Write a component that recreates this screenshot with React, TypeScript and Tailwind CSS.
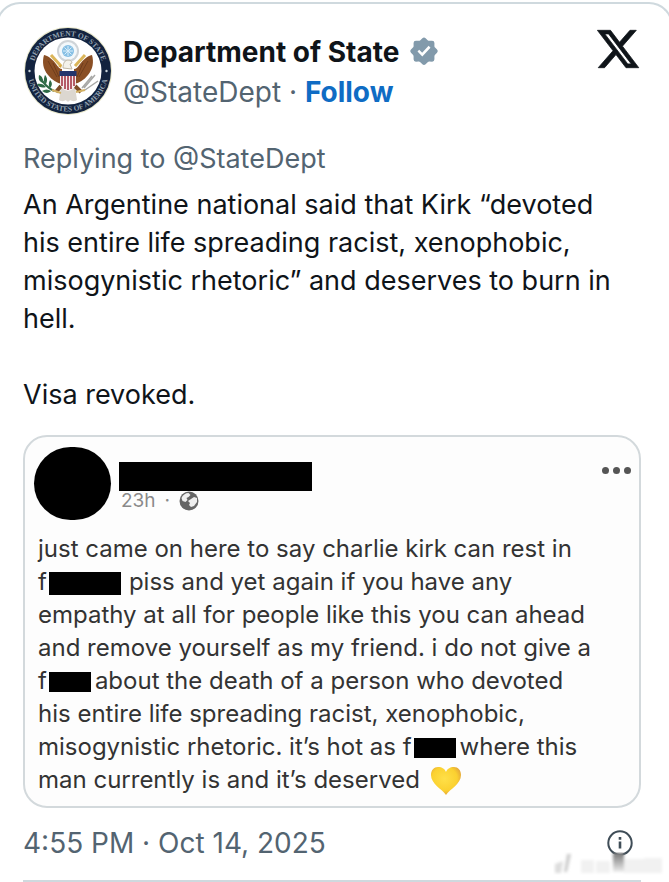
import type { ReactNode } from "react";

function StateSeal() {
  return (
    <svg viewBox="0 0 90 90" className="size-[90px] shrink-0" role="img" aria-label="Department of State">
      <defs>
        <path id="seal-top" d="M10 45a35 35 0 0 1 70 0" />
        <path id="seal-bottom" d="M4.600 45a40.400 40.400 0 0 0 80.800 0" />
      </defs>
      <circle cx="45" cy="45" r="44" fill="#e9e8cb" />
      <circle cx="45" cy="45" r="43" fill="#13233f" />
      <circle cx="45" cy="45" r="33.500" fill="#fff" />
      <g fill="#94a2b0" fontFamily="Liberation Serif, serif" fontSize="7.500" fontWeight="700">
        <text>
          <textPath href="#seal-top" startOffset="50%" textAnchor="middle">DEPARTMENT OF STATE</textPath>
        </text>
        <text>
          <textPath href="#seal-bottom" startOffset="50%" textAnchor="middle">UNITED STATES OF AMERICA</textPath>
        </text>
      </g>
      <circle cx="6.500" cy="45" r="1.200" fill="#c9d4dc" />
      <circle cx="83.500" cy="45" r="1.200" fill="#c9d4dc" />

      {/* glory above the eagle */}
      <circle cx="45" cy="25" r="11" fill="#cfd4d8" />
      <circle cx="45" cy="25" r="9" fill="#f3f8fb" />
      <circle cx="45" cy="25" r="6" fill="#86bfe4" />
      <path d="M45 20v10M40 25h10M41.500 21.500l7 7M48.500 21.500l-7 7" stroke="#d9eefa" strokeWidth="1" />

      {/* wings and tail */}
      <path d="M21 29c-2 7-1 14 4 20 4 5 9 8 14 9V43c-2 0-4-2-6-5-3-4-7-8-12-9z" fill="#8a4f25" />
      <path d="M69 29c2 7 1 14-4 20-4 5-9 8-14 9V43c2 0 4-2 6-5 3-4 7-8 12-9z" fill="#8a4f25" />
      <path d="M25 35l9 16M30 37l6 14M65 35l-9 16M60 37l-6 14" stroke="#6f3d1c" strokeWidth="1" />
      <path d="M28 29l10 11M62 29L52 40" stroke="#dcb65a" strokeWidth="3" />
      <path d="M38 61l-2 13c3 2 5 1 7 0 1 2 3 2 4 0 2 1 4 2 7 0l-2-13z" fill="#dcd7d0" />
      <path d="M38 60l-5 6M52 60l6 6" stroke="#7e4c28" strokeWidth="4" />
      <path d="M40 42c0-5 2-8 5-8 2 0 4 1 4 3l-2 1 2 5z" fill="#f4f2ea" stroke="#c0b7a5" />
      <path d="M39 39l-4 1 3 2z" fill="#d6a63c" />

      {/* shield */}
      <path d="M37 46h16v10c0 5-3 8-8 9-5-1-8-4-8-9z" fill="#f6eeee" />
      <path d="M39 50v10M42 50v13M45 50v14M48 50v13M51 50v10" stroke="#a02c3c" strokeWidth="1.500" />
      <path d="M36.500 45h17v5h-17z" fill="#24356c" />

      {/* olive branch and arrows */}
      <path d="M31 65c-6-3-11-8-14-14" stroke="#2f6b45" strokeWidth="2" fill="none" />
      <path d="M16 49c-1 5 1 7 4 8 0-5-1-7-4-8zM22 49c-2 5-1 8 1 9 2-4 1-7-1-9zM14 58c2 4 6 4 9 3-2-3-6-4-9-3zM27 54c-2 4-1 7 0 8 3-3 2-6 0-8zM19 65c4 3 7 2 9 0-3-2-6-2-9 0z" fill="#2f6b45" />
      <path d="M61 62l11-13M59 62l10-12M62 64l13-9" stroke="#a8a8a6" strokeWidth="1.500" />
      <path d="M29 64l9 3M53 66l9-2" stroke="#d3b163" strokeWidth="2" />
    </svg>
  );
}

function VerifiedBadge() {
  return (
    <svg viewBox="0 0 22 22" className="size-[34px]" role="img" aria-label="Verified account">
      <path
        fill="#829aab"
        fillRule="evenodd"
        d="M12.050 2.056a1.500 1.500 0 0 0-2.100 0L8.640 3.330c-.290.280-.680.440-1.080.430l-1.820-.020A1.500 1.500 0 0 0 4.250 5.230l.020 1.820c0 .400-.150.790-.430 1.080L2.560 9.440a1.500 1.500 0 0 0 0 2.100l1.280 1.310c.280.290.430.680.430 1.080l-.020 1.820a1.500 1.500 0 0 0 1.490 1.490l1.820-.020c.400 0 .790.150 1.080.430l1.310 1.280a1.500 1.500 0 0 0 2.100 0l1.310-1.280c.290-.280.680-.430 1.080-.430l1.820.020a1.500 1.500 0 0 0 1.490-1.490l-.020-1.820c0-.400.150-.790.430-1.080l1.280-1.310a1.500 1.500 0 0 0 0-2.100l-1.280-1.310a1.500 1.500 0 0 1-.430-1.080l.020-1.820a1.500 1.500 0 0 0-1.490-1.490l-1.820.020c-.400 0-.790-.150-1.080-.430zM15.200 8.200l-5.300 5.700-3.100-3.200 1.100-1.100 1.900 1.900 4.200-4.500z"
      />
    </svg>
  );
}

function XLogo() {
  return (
    <svg viewBox="0 0 24 24" className="size-[46px]" fill="#0f1419" stroke="#0f1419" strokeWidth="0.400" aria-hidden="true">
      <path d="M18.244 2.250h3.308l-7.227 8.260 8.502 11.240H16.170l-5.214-6.817L4.990 21.750H1.680l7.730-8.835L1.254 2.250H8.080l4.713 6.231zm-1.161 17.520h1.833L7.084 4.126H5.117z" />
    </svg>
  );
}

function GlobeIcon() {
  return (
    <svg viewBox="0 0 20 20" className="size-5" role="img" aria-label="Public">
      <circle cx="10" cy="10" r="9.500" fill="#666" />
      <path d="M2.500 7c1-3 4-5 7-5l2 2-2 2-2 1 1 2-2 2-3-1zM12 8l3-2 3 1v4l-3 4-3 1-2-2 1-2-2-2z" fill="#eee" />
    </svg>
  );
}

function YellowHeart() {
  return (
    <svg viewBox="0 0 32 32" className="ml-2.5 inline-block size-8 align-middle" role="img" aria-label="yellow heart">
      <defs>
        <radialGradient id="heart" cx="45%" cy="42%" r="60%">
          <stop offset="0" stopColor="#ffe048" />
          <stop offset="0.700" stopColor="#fbd130" />
          <stop offset="1" stopColor="#e3a43a" />
        </radialGradient>
      </defs>
      <path d="M16 30C12 24 1 19 1 10c0-5 3-8 7-8s7 2 8 5c1-3 4-5 8-5s7 3 7 8c0 9-11 14-15 20z" fill="url(#heart)" />
    </svg>
  );
}

// Faded mark in the bottom right corner
function Watermark() {
  return (
    <svg viewBox="0 0 116 26" className="pointer-events-none absolute right-0 bottom-1 h-[26px] w-[116px]" aria-hidden="true">
      <defs>
        <linearGradient id="mark-fade" x1="0" y1="0" x2="0" y2="1">
          <stop offset="0" stopColor="#777" />
          <stop offset="1" stopColor="#eee" />
        </linearGradient>
        <filter id="mark-blur">
          <feGaussianBlur stdDeviation="1.500" />
        </filter>
      </defs>
      <g filter="url(#mark-blur)">
        <path d="M2 12l8-3-2 12H2z" fill="#ddd" />
        <path d="M14 2h4l-4 18h-3z" fill="#ccc" />
        <path d="M28 8h13v13H28zM43 9h14v12H43zM71 7h20v14H71zM91 6h18v15H91z" fill="#f1f1f1" />
        <path d="M60 1h11v19H60z" fill="url(#mark-fade)" />
      </g>
    </svg>
  );
}

function Redacted({ className }: { className: string }) {
  return <span aria-label="redacted" className={`ml-0.5 inline-block bg-black align-middle ${className}`} />;
}

function Line({ children }: { children: ReactNode }) {
  return <span className="block">{children}</span>;
}

function QuotedPost() {
  return (
    <section className="mt-[21px] rounded-3xl border-2 border-[#d3d9dc] bg-[#fdfdfd] pt-2.5 pr-2 pb-[9px] pl-[13px] text-[#333]">
      <div className="flex items-start">
        <div className="-ml-1 h-[73px] w-[77px] rounded-full bg-black" />
        <div className="ml-2 flex-1 pt-[15px]">
          <div className="h-[29px] w-[193px] bg-black" />
          <div className="flex h-5 items-center gap-[9px] pl-0.5 text-[19px] text-[#8a8a8a]">
            <span>23h</span>
            <span>·</span>
            <GlobeIcon />
          </div>
        </div>
        <button type="button" aria-label="More" className="mt-5 flex gap-1">
          <span className="size-[7px] rounded-full bg-[#555]" />
          <span className="size-[7px] rounded-full bg-[#555]" />
          <span className="size-[7px] rounded-full bg-[#555]" />
        </button>
      </div>

      <p className="mt-3 text-[24px] leading-[33px] whitespace-nowrap">
        <Line>just came on here to say charlie kirk can rest in</Line>
        <Line>
          f<Redacted className="mr-2 h-[23px] w-[72px]" />
          piss and yet again if you have any
        </Line>
        <Line>empathy at all for people like this you can ahead</Line>
        <Line>and remove yourself as my friend. i do not give a</Line>
        <Line>
          f<Redacted className="mr-1 h-5 w-[42px]" />
          about the death of a person who devoted
        </Line>
        <Line>his entire life spreading racist, xenophobic,</Line>
        <Line>
          misogynistic rhetoric. it’s hot as f<Redacted className="mr-1 h-5 w-[42px]" />
          where this
        </Line>
        <Line>
          man currently is and it’s deserved
          <YellowHeart />
        </Line>
      </p>
    </section>
  );
}

export default function App() {
  return (
    <main className="relative overflow-hidden bg-white pt-0.5 font-['Inter',sans-serif] text-[#0f1419]">
      <article className="-mx-1 rounded-t-3xl border-2 border-b-0 border-[#cfd9de] pt-[22px] pr-[30px] pl-[25px]">
        <header className="flex items-start">
          <StateSeal />
          <div className="ml-2.5 flex-1 pt-1.5 text-[28px] leading-10">
            <div className="flex items-center gap-2 font-bold">
              <span>Department of State</span>
              <VerifiedBadge />
            </div>
            <div className="text-[#536471]">
              @StateDept ·{" "}
              <a href="#follow" className="font-bold text-[#0f6cc4]">
                Follow
              </a>
            </div>
          </div>
          <a href="#x" aria-label="View on X">
            <XLogo />
          </a>
        </header>

        <a href="#replying" className="mt-6 block text-[27px] leading-[38px] text-[#536471]">
          Replying to @StateDept
        </a>
        <div className="mt-2 pr-4 text-[27px] leading-[38px]">
          <p>
            An Argentine national said that Kirk “devoted his entire life spreading racist, xenophobic, misogynistic
            rhetoric” and deserves to burn in hell.
          </p>
          <p className="mt-[38px]">Visa revoked.</p>
        </div>

        <QuotedPost />

        <footer className="mt-[15px] flex items-center justify-between border-b-2 border-[#cfd9de] pb-[17px] text-[28px] leading-10 text-[#536471]">
          <time>4:55 PM · Oct 14, 2025</time>
          <button type="button" aria-label="Post information" className="mr-2">
            <svg viewBox="0 0 26 26" className="size-[26px]" fill="none" stroke="#3f4d57" strokeWidth="2">
              <circle cx="13" cy="13" r="11.700" />
              <path d="M13 11.500v7M13 7v2.700" strokeWidth="2.600" />
            </svg>
          </button>
        </footer>
      </article>
      <Watermark />
    </main>
  );
}
